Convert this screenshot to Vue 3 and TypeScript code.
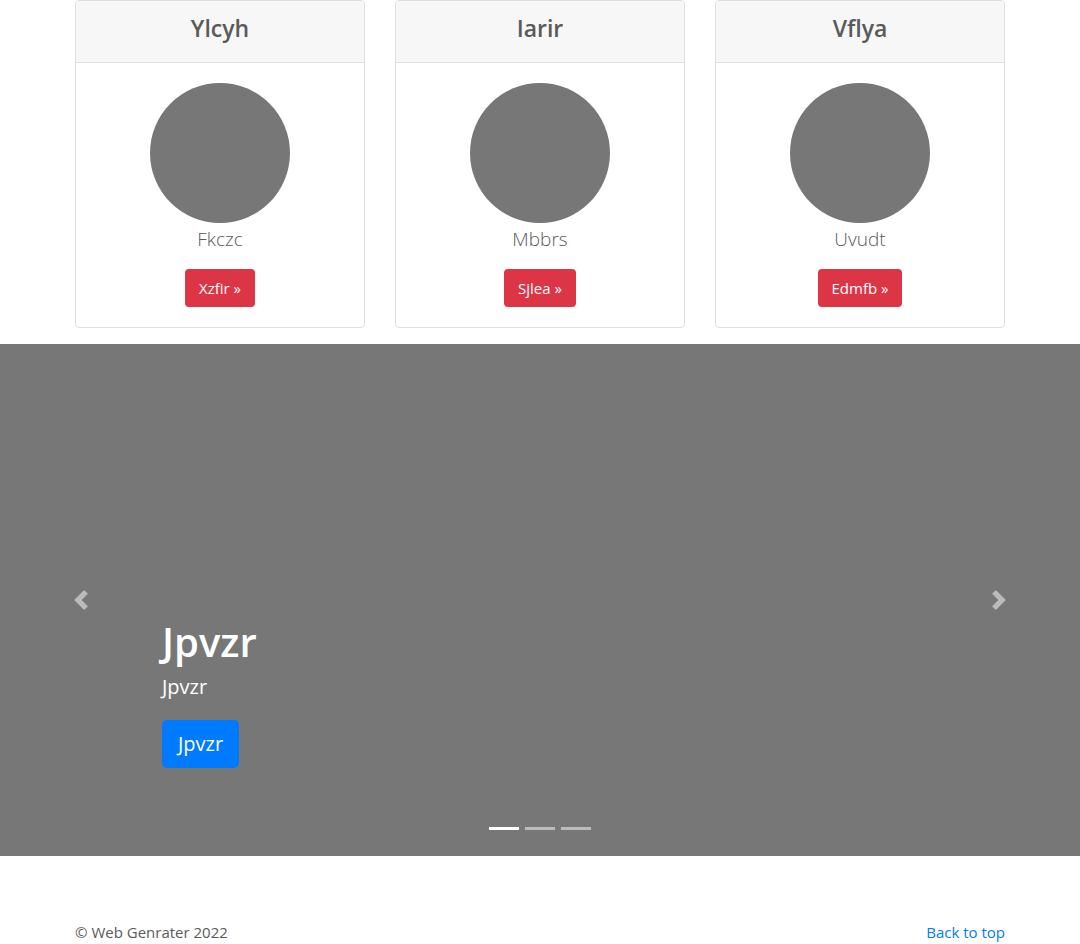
<script setup lang="ts">
import { ref } from 'vue'

interface Feature {
  title: string
  lead: string
  action: string
}

const features: Feature[] = [
  { title: 'Ylcyh', lead: 'Fkczc', action: 'Xzfir' },
  { title: 'Iarir', lead: 'Mbbrs', action: 'Sjlea' },
  { title: 'Vflya', lead: 'Uvudt', action: 'Edmfb' },
]

const slideCount = 3
const active = ref(0)

function move(step: number) {
  active.value = (active.value + step + slideCount) % slideCount
}
</script>

<template>
  <div id="top" class="page">
    <main>
      <section class="container cards">
        <article v-for="f in features" :key="f.title" class="card">
          <header class="card-header"><h4>{{ f.title }}</h4></header>
          <div class="card-body">
            <div class="avatar"></div>
            <p class="lead">{{ f.lead }}</p>
            <a class="btn btn-danger" href="#">{{ f.action }} »</a>
          </div>
        </article>
      </section>

      <section class="carousel" aria-label="Carousel">
        <button class="control" type="button" aria-label="Previous" @click="move(-1)">
          <svg viewBox="0 0 8 8" aria-hidden="true"><path d="M5.25 0l-4 4 4 4 1.5-1.5L4.25 4l2.5-2.5L5.25 0z" /></svg>
        </button>
        <div class="slide">
          <h1>Jpvzr</h1>
          <p>Jpvzr</p>
          <a class="btn btn-primary" href="#">Jpvzr</a>
        </div>
        <button class="control" type="button" aria-label="Next" @click="move(1)">
          <svg viewBox="0 0 8 8" aria-hidden="true"><path d="M2.75 0l-1.5 1.5L3.75 4l-2.5 2.5L2.75 8l4-4-4-4z" /></svg>
        </button>
        <div class="indicators">
          <button
            v-for="n in slideCount"
            :key="n"
            type="button"
            :class="{ active: active === n - 1 }"
            :aria-label="`Slide ${n}`"
            @click="active = n - 1"
          ></button>
        </div>
      </section>
    </main>

    <footer class="container footer">
      <span>© Web Genrater 2022</span>
      <a href="#top">Back to top</a>
    </footer>
  </div>
</template>

<style>
body {
  margin: 0;
  background: #fff;
}
</style>

<style scoped>
.page,
.page * {
  box-sizing: border-box;
}
.page {
  font-family: "Segoe UI", "Open Sans", "Noto Sans", sans-serif;
  font-size: 15px;
  line-height: 24px;
  color: #5a5a5a;
}
.container {
  width: 100%;
  max-width: 960px;
  margin: 0 auto;
  padding: 0 15px;
}
.cards {
  display: grid;
  grid-template-columns: repeat(3, 1fr);
  gap: 30px;
  text-align: center;
}
.card {
  margin-bottom: 16px;
  border: 1px solid #dfdfdf;
  border-radius: 4px;
  overflow: hidden;
}
.card-header {
  padding: 12px 20px 18px;
  background: #f7f7f7;
  border-bottom: 1px solid #dfdfdf;
}
h4 {
  margin: 0;
  font-size: 23px;
  font-weight: 600;
  line-height: 31px;
}
.card-body {
  padding: 20px;
}
.avatar {
  width: 140px;
  height: 140px;
  margin: 0 auto;
  border-radius: 50%;
  background: #777;
}
.lead {
  margin: 0 0 14px;
  font-size: 19px;
  font-weight: 300;
  line-height: 32px;
}
.btn {
  display: inline-block;
  vertical-align: top;
  color: #fff;
  text-decoration: none;
}
.btn-danger {
  padding: 7px 14px;
  border-radius: 4px;
  background: #dc3545;
}
.carousel {
  position: relative;
  display: flex;
  height: 512px;
  background: #777;
  color: #fff;
}
.control {
  display: flex;
  flex: 0 0 15%;
  align-items: center;
  justify-content: center;
  padding: 0;
  border: 0;
  background: none;
  opacity: 0.5;
  cursor: pointer;
}
.control svg {
  width: 20px;
  height: 20px;
  fill: #fff;
}
.slide {
  display: flex;
  flex: 1;
  flex-direction: column;
  align-items: flex-start;
  justify-content: flex-end;
  padding-bottom: 88px;
}
h1 {
  margin: 0 0 6px;
  font-size: 40px;
  font-weight: 600;
  line-height: 48px;
}
.slide p {
  margin: 0 0 18px;
  font-size: 20px;
  line-height: 30px;
}
.btn-primary {
  padding: 9px 16px;
  border-radius: 5px;
  background: #007bff;
  font-size: 20px;
  line-height: 30px;
}
.indicators {
  position: absolute;
  right: 15%;
  bottom: 16px;
  left: 15%;
  display: flex;
  justify-content: center;
  gap: 6px;
}
.indicators button {
  width: 30px;
  height: 23px;
  padding: 0;
  border: solid transparent;
  border-width: 10px 0;
  background: #fff;
  background-clip: padding-box;
  opacity: 0.5;
  cursor: pointer;
}
.indicators button.active {
  opacity: 1;
}
.footer {
  display: flex;
  justify-content: space-between;
  padding-top: 64px;
}
.footer a {
  color: #007bff;
  text-decoration: none;
}
</style>
